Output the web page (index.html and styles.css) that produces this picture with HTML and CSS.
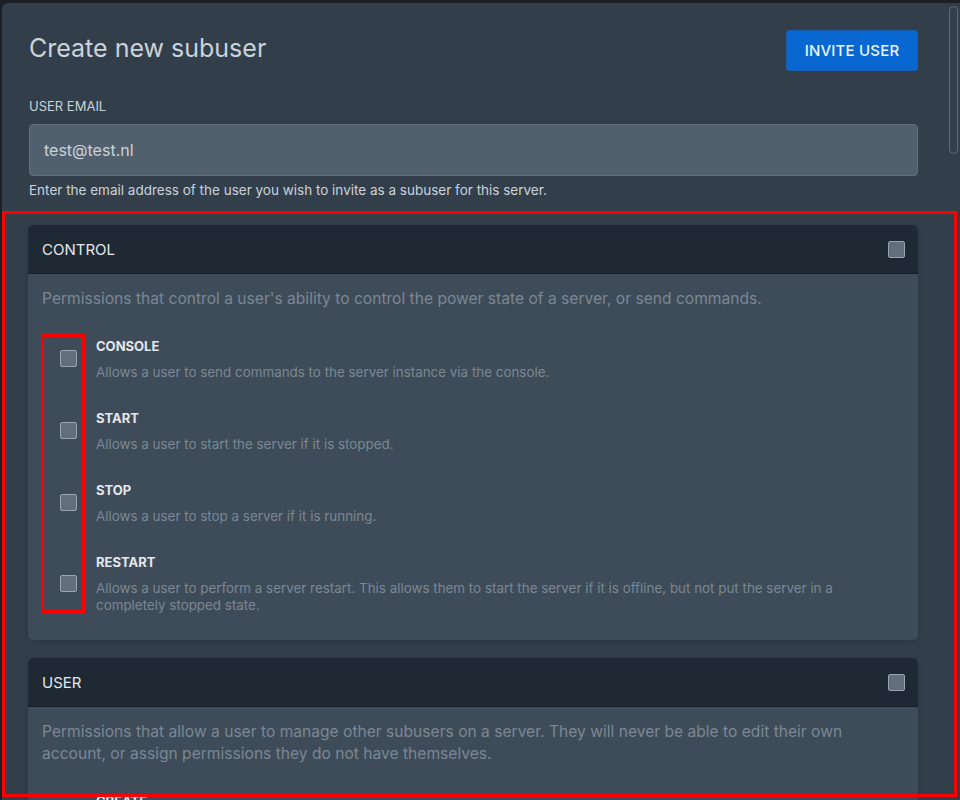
FILE: index.html
```html
<!DOCTYPE html>
<html lang="en">
<head>
  <meta charset="UTF-8" />
  <meta name="viewport" content="width=device-width, initial-scale=1.0"/>
  <title>Create new subuser</title>
  <link rel="stylesheet" href="styles.css">
</head>
<body>

<div class="modal">
  <div class="modal-head">
    <h2>Create new subuser</h2>
    <button class="btn-primary">Invite User</button>
  </div>

  <label class="field-label" for="email">User Email</label>
  <input class="field-input" id="email" type="text" value="test@test.nl">
  <p class="field-help">Enter the email address of the user you wish to invite as a subuser for this server.</p>

  <div class="perm-groups">
    <section class="perm-card">
      <div class="perm-card-head">
        <h3>Control</h3>
        <span class="checkbox"></span>
      </div>
      <div class="perm-card-body">
        <p class="perm-card-desc">Permissions that control a user's ability to control the power state of a server, or send commands.</p>
        <div class="perm-list">
          <label class="perm-row">
            <span class="checkbox"></span>
            <div>
              <div class="perm-name">console</div>
              <div class="perm-desc">Allows a user to send commands to the server instance via the console.</div>
            </div>
          </label>
          <label class="perm-row">
            <span class="checkbox"></span>
            <div>
              <div class="perm-name">start</div>
              <div class="perm-desc">Allows a user to start the server if it is stopped.</div>
            </div>
          </label>
          <label class="perm-row">
            <span class="checkbox"></span>
            <div>
              <div class="perm-name">stop</div>
              <div class="perm-desc">Allows a user to stop a server if it is running.</div>
            </div>
          </label>
          <label class="perm-row">
            <span class="checkbox"></span>
            <div>
              <div class="perm-name">restart</div>
              <div class="perm-desc">Allows a user to perform a server restart. This allows them to start the server if it is offline, but not put the server in a completely stopped state.</div>
            </div>
          </label>
        </div>
      </div>
    </section>

    <section class="perm-card">
      <div class="perm-card-head">
        <h3>User</h3>
        <span class="checkbox"></span>
      </div>
      <div class="perm-card-body">
        <p class="perm-card-desc">Permissions that allow a user to manage other subusers on a server. They will never be able to edit their own account, or assign permissions they do not have themselves.</p>
        <div class="perm-list">
          <label class="perm-row">
            <span class="checkbox"></span>
            <div>
              <div class="perm-name">create</div>
              <div class="perm-desc">Allows a user to create new subusers for the server.</div>
            </div>
          </label>
          <label class="perm-row">
            <span class="checkbox"></span>
            <div>
              <div class="perm-name">read</div>
              <div class="perm-desc">Allows the user to view subusers and their permissions for the server.</div>
            </div>
          </label>
        </div>
      </div>
    </section>
  </div>
</div>

<div class="scroll-thumb"></div>
<div class="mark mark-groups"></div>
<div class="mark mark-boxes"></div>

</body>
</html>
```

FILE: styles.css
```css
html, body {
  height: 100%;
  overflow: hidden;
}

body {
  margin: 0;
  padding: 3px 0 0 2px;
  box-sizing: border-box;
  background: #1b2027;
  font-family: Inter, 'Noto Sans', sans-serif;
  color: #cbd2d9;
  position: relative;
}

.modal {
  background: #323f4b;
  border-top-left-radius: 6px;
  height: 100%;
  padding: 27px 42px 0 26px;
  overflow: hidden;
}

.modal-head {
  display: flex;
  justify-content: space-between;
  align-items: flex-start;
  margin-bottom: 27px;
  padding-left: 1px;
}

.modal-head h2 {
  margin: 1px 0 0;
  font-size: 25px;
  line-height: 34px;
  font-weight: 400;
  color: #cbd2d9;
}

.btn-primary {
  width: 132px;
  height: 41px;
  background: #0967d2;
  border: 1px solid #1c5fb0;
  border-radius: 3px;
  color: #e6f6ff;
  font-family: inherit;
  font-size: 15px;
  font-weight: 500;
  text-transform: uppercase;
  letter-spacing: 0.2px;
  cursor: pointer;
}

.field-label {
  display: block;
  font-size: 13px;
  line-height: 16px;
  text-transform: uppercase;
  color: #cbd2d9;
  margin: 0 0 10px 1px;
}

.field-input {
  display: block;
  box-sizing: border-box;
  width: calc(100% - 1px);
  margin-left: 1px;
  height: 52px;
  padding: 0 14px;
  background: #52606d;
  border: 1px solid #616e7c;
  border-radius: 4px;
  color: #cbd2d9;
  font-family: inherit;
  font-size: 16px;
  outline: none;
}

.field-help {
  margin: 6px 0 27px 1px;
  font-size: 13.5px;
  line-height: 16px;
  color: #cbd2d9;
}

.perm-groups {
  display: flex;
  flex-direction: column;
  gap: 18px;
}

.perm-card {
  background: #3e4c59;
  border-radius: 5px;
  box-shadow: 0 2px 6px rgba(0,0,0,0.15);
  overflow: hidden;
}

.perm-card-head {
  height: 48px;
  background: #1f2933;
  border-bottom: 1px solid #161d24;
  display: flex;
  justify-content: space-between;
  align-items: center;
  padding: 0 13px 0 14px;
}

.perm-card-head h3 {
  margin: 0;
  font-size: 15px;
  font-weight: 400;
  text-transform: uppercase;
  color: #e4e7eb;
}

.perm-card-body {
  padding: 14px 14px 26px;
}

.perm-card-desc {
  margin: 0 0 26px;
  font-size: 15.6px;
  line-height: 22px;
  color: #7b8794;
}

.perm-list {
  display: flex;
  flex-direction: column;
  gap: 27px;
}

.perm-row {
  display: flex;
  align-items: center;
  padding-left: 18px;
  cursor: pointer;
}

.perm-row .checkbox {
  margin-right: 19px;
}

.perm-name {
  font-size: 13px;
  line-height: 20px;
  font-weight: 700;
  text-transform: uppercase;
  color: #e4e7eb;
}

.perm-desc {
  margin-top: 8px;
  font-size: 13.4px;
  line-height: 17px;
  color: #7b8794;
}

.checkbox {
  flex: none;
  width: 15px;
  height: 15px;
  background: #616e7c;
  border: 1px solid #9aa5b1;
  border-radius: 2px;
}

.scroll-thumb {
  position: absolute;
  left: 949px;
  top: 6px;
  width: 7px;
  height: 146px;
  border: 1px solid #5f6b78;
  border-radius: 5px;
}

.mark {
  position: absolute;
  border: 3px solid #ff0000;
  box-sizing: border-box;
}

.mark-groups {
  left: 2px;
  top: 211px;
  width: 955px;
  height: 586px;
}

.mark-boxes {
  left: 41px;
  top: 334px;
  width: 44px;
  height: 279px;
}
```
